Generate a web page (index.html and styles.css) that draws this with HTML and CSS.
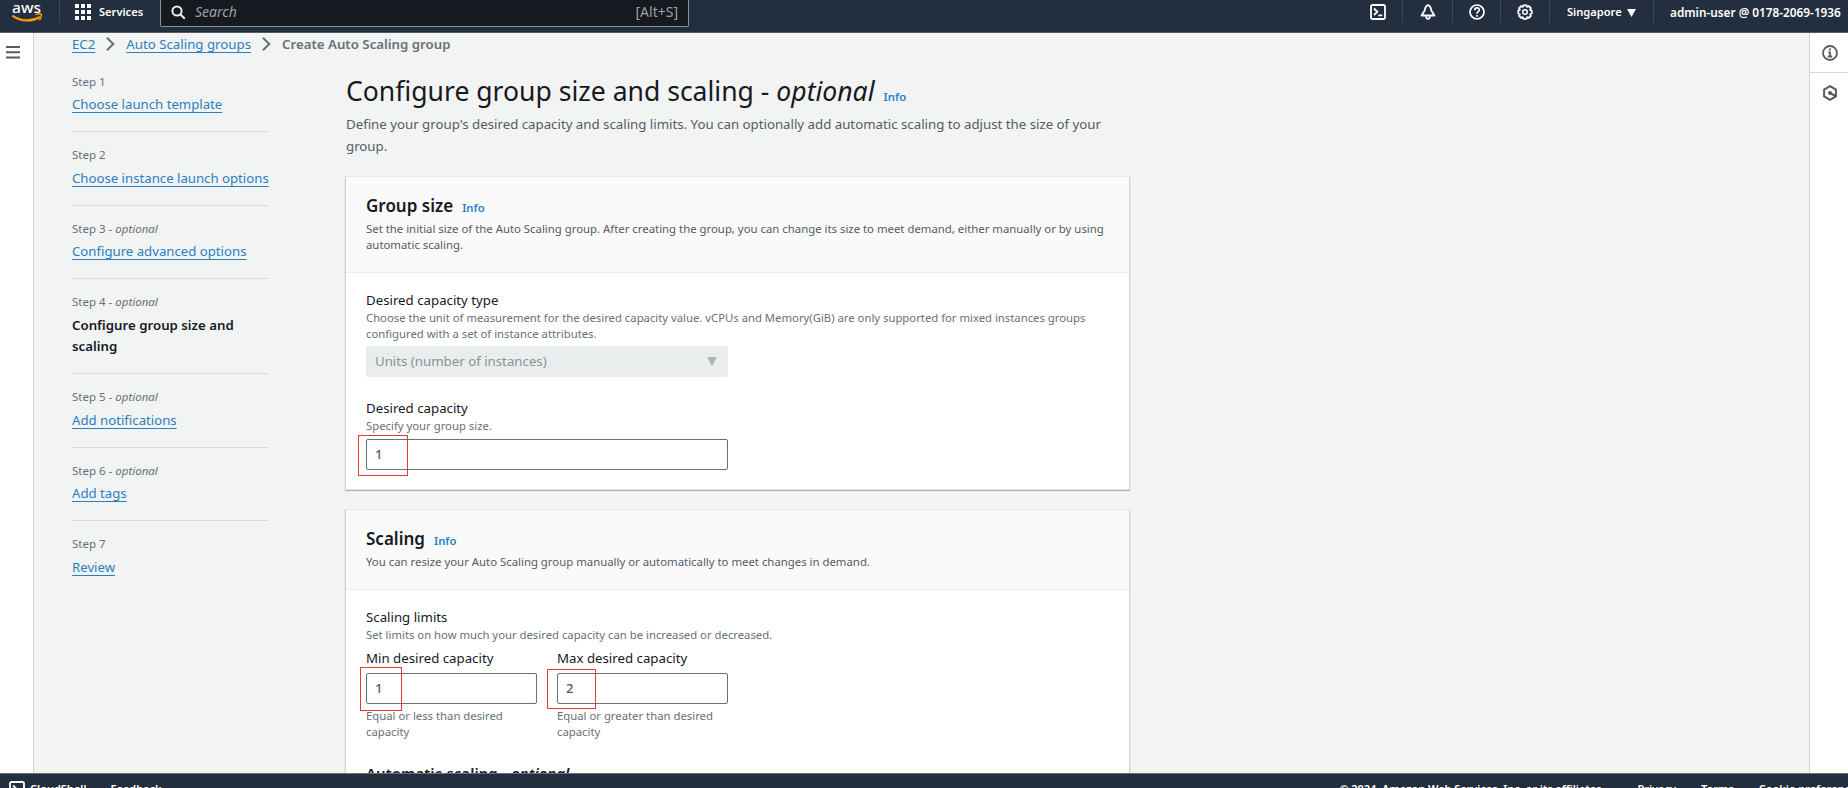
FILE: index.html
```html
<!DOCTYPE html>
<html lang="en">
<head>
<meta charset="utf-8">
<title>Create Auto Scaling group</title>
<link rel="stylesheet" href="styles.css">
</head>
<body>
<header class="topbar">
  <div class="brand">
    <svg width="31" height="23" viewBox="0 0 31 23"><text class="brand-text" x="0" y="11" textLength="29" lengthAdjust="spacingAndGlyphs">aws</text><path d="M.4 13.600c8.500 6 19 6.400 27.600 1.400" fill="none" stroke="#f90" stroke-width="2.200"/><path d="M23.500 12.600c2-.8 5-1 5.800-.3.400 1-.3 3.900-2 5.700" fill="none" stroke="#f90" stroke-width="1.500"/></svg>
  </div>
  <div class="services">
    <svg width="17" height="17" viewBox="0 0 17 17" fill="#fff"><path d="M0 0h4v4H0zM6 0h4v4H6zM12 0h4v4h-4zM0 6h4v4H0zM6 6h4v4H6zM12 6h4v4h-4zM0 12h4v4H0zM6 12h4v4H6zM12 12h4v4h-4z"/></svg>
    <span class="t t-services">Services</span>
  </div>
  <div class="search">
    <svg width="15" height="15" viewBox="0 0 15 15" fill="none" stroke="#eaeded" stroke-width="2"><circle cx="6" cy="6" r="4.600"/><path d="M9.300 9.300l4.500 4.500"/></svg>
    <span class="t t-search">Search</span>
    <span class="t t-key">[Alt+S]</span>
  </div>
  <div class="tools">
    <div class="tool tool-shell"><svg width="16" height="16" viewBox="0 0 16 16" fill="none" stroke="#fff" stroke-width="1.800"><rect x="1" y="1" width="14" height="14" rx="1.500"/><path d="M4 4.500l3.300 3.300L4 11M8.300 11.300h4"/></svg></div>
    <div class="tool tool-bell"><svg width="16" height="16" viewBox="0 0 16 16" fill="none" stroke="#fff" stroke-width="1.800" stroke-linejoin="round"><path d="M8 1.200C5.500 1.800 5 4 4.700 6.500L1.500 11.500h13L11.300 6.500C11 4 10.500 1.800 8 1.200z"/><path d="M6 12.300c.2 3.400 3.800 3.400 4 0"/></svg></div>
    <div class="tool tool-help"><svg width="16" height="16" viewBox="0 0 16 16" fill="none" stroke="#fff" stroke-width="1.700"><circle cx="8" cy="8" r="7"/><path d="M5.700 6.300c.1-3.300 4.700-3 4.600-.3C10.300 7.800 8 7.600 8 9.700M8 11v1.700"/></svg></div>
    <div class="tool tool-gear"><svg width="16" height="16" viewBox="0 0 16 16" fill="none" stroke="#fff"><path stroke-width="1.800" stroke-linejoin="round" d="M6.400 1.300h3.200l.6 1.600 1.700-.7 2 2-.8 1.700 1.600.6v3l-1.600.7.8 1.700-2 2-1.700-.7-.6 1.600H6.400l-.6-1.600-1.700.7-2-2 .7-1.700-1.500-.7v-3l1.500-.6-.7-1.700 2-2 1.700.7z"/><circle cx="8" cy="8" r="2.300" stroke-width="1.500"/></svg></div>
    <div class="tool tool-region"><span class="t t-region">Singapore</span><svg width="9" height="8" viewBox="0 0 9 8"><path d="M0 0h9L4.500 8z" fill="#fff"/></svg></div>
    <div class="tool tool-user"><span class="t t-user">admin-user @ 0178-2069-1936</span></div>
  </div>
</header>
<div class="workspace">
  <aside class="rail rail-left"><svg width="14" height="13" viewBox="0 0 14 13" stroke="#545b64" stroke-width="2"><path d="M0 1h14M0 6.300h14M0 11.600h14"/></svg></aside>
  <main class="content">
    <nav class="crumbs">
      <a class="link t">EC2</a>
      <svg width="9" height="14" viewBox="0 0 9 14" fill="none" stroke="#687078" stroke-width="2"><path d="M1 .8L7.300 7 1 13.200"/></svg>
      <a class="link t">Auto Scaling groups</a>
      <svg width="9" height="14" viewBox="0 0 9 14" fill="none" stroke="#687078" stroke-width="2"><path d="M1 .8L7.300 7 1 13.200"/></svg>
      <b class="t t-here">Create Auto Scaling group</b>
    </nav>
    <div class="columns">
      <ol class="steps">
        <li class="step"><small>Step 1</small><a class="link t">Choose launch template</a></li>
        <li class="step"><small>Step 2</small><a class="link t">Choose instance launch options</a></li>
        <li class="step"><small>Step 3 - <i>optional</i></small><a class="link t">Configure advanced options</a></li>
        <li class="step"><small>Step 4 - <i>optional</i></small><b>Configure group size and scaling</b></li>
        <li class="step"><small>Step 5 - <i>optional</i></small><a class="link t">Add notifications</a></li>
        <li class="step"><small>Step 6 - <i>optional</i></small><a class="link t">Add tags</a></li>
        <li class="step"><small>Step 7</small><a class="link t">Review</a></li>
      </ol>
      <section class="form">
        <h1>Configure group size and scaling - <i>optional</i><a class="info">Info</a></h1>
        <p class="lead"><span class="t">Define your group's desired capacity and scaling limits. You can optionally add automatic scaling to adjust the size of your</span><br>group.</p>
        <div class="panel">
          <div class="panel-head">
            <h2>Group size<a class="info">Info</a></h2>
            <p class="note note-dark"><span class="t">Set the initial size of the Auto Scaling group. After creating the group, you can change its size to meet demand, either manually or by using</span><br>automatic scaling.</p>
          </div>
          <div class="panel-body">
            <div class="label">Desired capacity type</div>
            <p class="note note-unit"><span class="t">Choose the unit of measurement for the desired capacity value. vCPUs and Memory(GiB) are only supported for mixed instances groups</span><br>configured with a set of instance attributes.</p>
            <div class="select"><span>Units (number of instances)</span><svg width="10" height="9" viewBox="0 0 10 9"><path d="M0 0h10L5 9z" fill="#aab7b8"/></svg></div>
            <div class="label">Desired capacity</div>
            <p class="note">Specify your group size.</p>
            <div class="input input-wide">1<span class="mark mark-desired"></span></div>
          </div>
        </div>
        <div class="panel">
          <div class="panel-head">
            <h2>Scaling<a class="info">Info</a></h2>
            <p class="note note-dark">You can resize your Auto Scaling group manually or automatically to meet changes in demand.</p>
          </div>
          <div class="panel-body">
            <div class="label">Scaling limits</div>
            <p class="note note-unit">Set limits on how much your desired capacity can be increased or decreased.</p>
            <div class="limits">
              <div class="limit"><div class="label">Min desired capacity</div><div class="input">1<span class="mark mark-min"></span></div><p class="note">Equal or less than desired<br>capacity</p></div>
              <div class="limit"><div class="label">Max desired capacity</div><div class="input">2<span class="mark mark-max"></span></div><p class="note">Equal or greater than desired<br>capacity</p></div>
            </div>
            <h3>Automatic scaling - <i>optional</i></h3>
          </div>
        </div>
      </section>
    </div>
  </main>
  <aside class="rail rail-right">
    <div class="rail-item"><svg width="16" height="16" viewBox="0 0 16 16" fill="none" stroke="#545b64" stroke-width="1.800"><circle cx="8" cy="8" r="7"/><path d="M8 3.600v1.900M6.300 7.400H8v3.800M5.800 11.500h4.400"/></svg></div>
    <div class="rail-item"><svg width="16" height="16" viewBox="0 0 16 16" fill="none" stroke="#545b64" stroke-width="2"><path d="M8 1.200l5.900 3.400v6.800L8 14.800l-5.900-3.400V4.600z"/><circle cx="8" cy="8" r="2" fill="#545b64" stroke="none"/><path d="M8 8l5.500 3"/></svg></div>
  </aside>
</div>
<footer class="bottombar">
  <svg width="16" height="16" viewBox="0 0 16 16" fill="none" stroke="#fff" stroke-width="1.800"><rect x="1" y="1" width="14" height="14" rx="1.500"/><path d="M4 4.500l3.300 3.300L4 11M8.300 11.300h4"/></svg>
  <span class="t f-shell">CloudShell</span><span class="t f-feedback">Feedback</span>
  <span class="t f-copy">© 2024, Amazon Web Services, Inc. or its affiliates.</span><span class="t f-privacy">Privacy</span><span class="t f-terms">Terms</span><span class="t f-cookie">Cookie preferences</span>
</footer>
</body>
</html>
```
FILE: styles.css
```css
* { box-sizing: border-box; }
body { margin: 0; width: 1848px; height: 788px; overflow: hidden; display: flex; flex-direction: column; background: #f2f3f3; color: #16191f; font: 13.250px/21.5px "Noto Sans", sans-serif; }
h1, h2, h3, p, ol { margin: 0; padding: 0; }
b, h2, h3 { font-weight: 600; }
svg { display: block; flex: none; }
.t { white-space: nowrap; }

.topbar { flex: none; height: 33px; display: flex; align-items: flex-start; background: #232f3e; border-bottom: 1px solid #545b64; color: #fff; font-size: 11.100px; font-weight: 600; line-height: 24px; }
.brand { width: 44px; height: 25px; padding: 2px 0 0 12px; }
.brand-text { font: 500 15px "Noto Sans", sans-serif; fill: #fff; }
.services { width: 101px; height: 23px; margin-left: 15px; padding-left: 15px; display: flex; gap: 7px; border-left: 1px solid #414750; }
.services svg { margin-top: 4px; }
.search { width: 529px; height: 27px; display: flex; padding: 0 10px; background: #16191f; border: 1px solid #879596; border-top: 0; border-radius: 0 0 2px 2px; color: #95a5a6; font-size: 14px; font-weight: 400; }
.search svg { margin: 5px 9px 0 0; }
.t-search { font-style: italic; }
.t-key { margin-left: auto; }
.tools { margin-left: auto; display: flex; }
.tool { height: 23px; display: flex; border-right: 1px solid #414750; }
.tool svg { margin-top: 4px; }
.tool-shell { width: 33px; }
.tool-bell { width: 50px; padding-left: 17px; }
.tool-help { width: 48px; padding-left: 16px; }
.tool-gear { width: 49px; padding-left: 16px; }
.tool-region { width: 104px; padding-left: 17px; justify-content: space-between; padding-right: 17px; }
.tool-region svg { margin-top: 9px; }
.tool-user { width: 194px; padding-left: 16px; border: 0; font-size: 11.800px; }

.workspace { flex: 1; min-height: 0; display: flex; overflow: hidden; }
.rail { flex: none; background: #fff; }
.rail-left { width: 34px; padding: 13px 0 0 6px; border-right: 1px solid #d0d4d4; }
.rail-right { width: 39px; border-left: 1px solid #d0d4d4; }
.rail-item { height: 40px; padding: 12px 0 0 12px; border-bottom: 1px solid #d5dbdb; }
.rail-item + .rail-item { border: 0; }
.content { flex: 1; padding-left: 38px; }
.link { color: #2a7fc1; text-decoration: underline 1px; text-underline-offset: 3px; text-decoration-skip-ink: none; }
.crumbs { height: 25px; padding-top: .6px; display: flex; color: #687078; }
.crumbs svg { margin: 3px 11px 0 11px; }
.t-here { font-size: 13.250px; }

.columns { display: flex; }
.steps { width: 196px; margin-right: 77px; padding-top: 1px; list-style: none; }
.step { padding: 12.900px 0 15.600px; border-bottom: 1px solid #d5dbdb; }
.step:last-child { border: 0; }
.step small { display: block; margin-bottom: 2.500px; color: #687078; font-size: 11.500px; line-height: 20px; }
.step b { display: block; width: 180px; }
.step .link { font-size: 13.200px; }

.form { width: 785px; padding-top: 16px; }
h1 { height: 34px; margin-left: 1px; font-size: 26.550px; font-weight: 400; line-height: 34px; }
.info { margin-left: 9px; color: #2a7fc1; font-size: 11.300px; font-weight: 600; line-height: 1; }
.lead { margin: 6px 0 19px 1px; color: #545b64; }
.panel { margin-bottom: 19px; background: #fff; border: 1px solid #e3e7e7; border-left-color: #d0d4d4; border-right-color: #d0d4d4; box-shadow: 0 1px 1px #aab7b8; }
.panel-head { padding: 18px 20px 19.500px; background: #fafafa; border-bottom: 1px solid #eaeded; }
h2 { height: 22px; margin-bottom: 4px; font-size: 17px; line-height: 22px; }
.note { color: #687078; font-size: 11.320px; line-height: 15.700px; }
.note-dark { color: #545b64; font-size: 11.370px; }
.note-unit { font-size: 11.300px; }
.panel-body { padding: 17px 20px 19px; }
.label { line-height: 20px; }
.select { width: 362px; height: 31px; margin: 5px 0 21px; padding: 0 11px 0 9px; display: flex; align-items: center; justify-content: space-between; background: #eaeded; color: #879596; border-radius: 2px; }
.input { position: relative; height: 31px; margin-top: 5px; padding-left: 8px; line-height: 29px; background: #fff; border: 1px solid #687078; border-radius: 2px; color: #545b64; font-weight: 500; }
.input-wide { width: 362px; }
.mark { position: absolute; border: 1px solid #e53935; }
.mark-desired { left: -9px; top: -5px; width: 50px; height: 41px; }
.mark-min { left: -7px; top: -7px; width: 42px; height: 44px; }
.mark-max { left: -11px; top: -5px; width: 49px; height: 40px; }
.limits { display: flex; gap: 20px; margin-top: 5px; }
.limit { width: 171px; }
.limit .note { margin-top: 4px; white-space: nowrap; }
h3 { margin-top: 23px; font-size: 15px; line-height: 22px; word-spacing: .5px; }

.bottombar { flex: none; height: 15px; overflow: hidden; display: flex; padding: 7px 0 0 9px; background: #232f3e; border-top: 1px solid #687078; color: #fff; font-size: 11px; font-weight: 600; line-height: 15px; }
.f-shell { margin-left: 5px; }
.f-feedback { margin-left: 24px; }
.f-copy { margin-left: auto; letter-spacing: -.06px; }
.f-privacy { margin-left: 33px; }
.f-terms, .f-cookie { margin-left: 25px; }
.f-cookie { margin-right: -14px; }
```
